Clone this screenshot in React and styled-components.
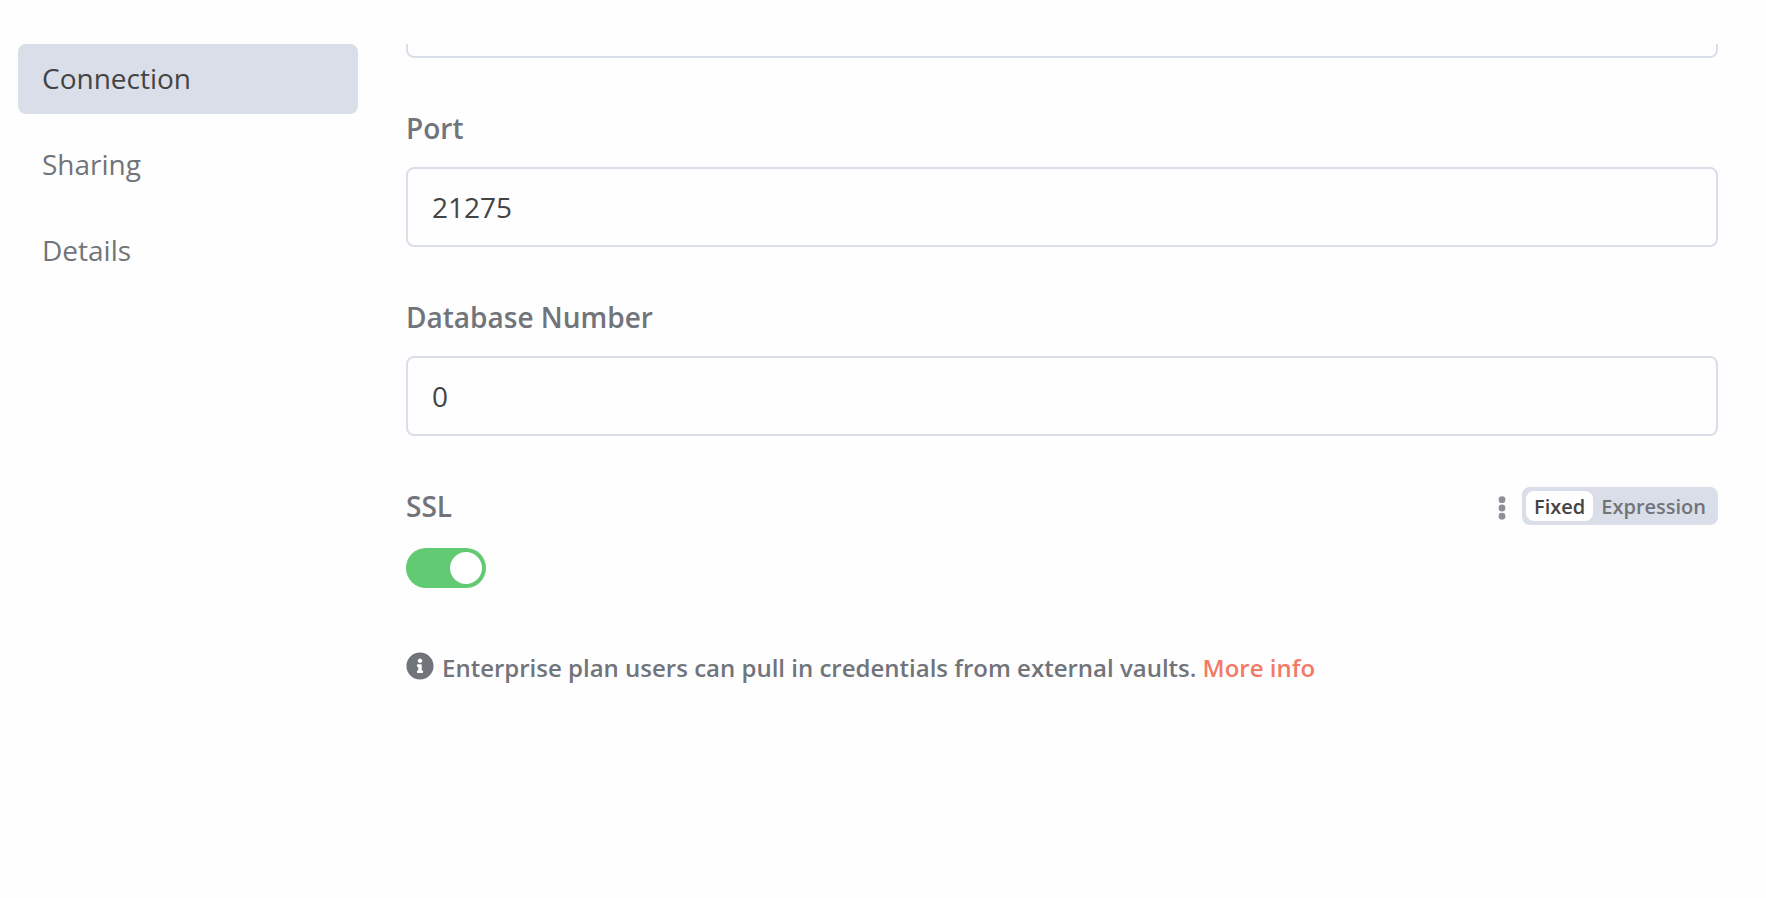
import React, { useState } from 'react'
import styled, { createGlobalStyle } from 'styled-components'

const GlobalStyle = createGlobalStyle`
  * {
    box-sizing: border-box;
  }
  body {
    margin: 0;
    background: #fefefe;
    color: #71747a;
    font-family: 'Open Sans', 'Noto Sans', sans-serif;
  }
  button,
  input {
    font-family: inherit;
  }
`

const Page = styled.main`
  display: flex;
  gap: 48px;
  padding: 44px 48px 44px 18px;
`

const Menu = styled.nav`
  display: flex;
  flex-direction: column;
  flex: 0 0 340px;
  gap: 16px;
`

const MenuItem = styled.button`
  height: 70px;
  padding: 0 24px 2px;
  border: none;
  border-radius: 8px;
  background: ${props => (props.$active ? '#dadee8' : 'transparent')};
  color: ${props => (props.$active ? '#444' : '#71747a')};
  font-size: 28px;
  line-height: 38px;
  text-align: left;
  cursor: pointer;
`

const Content = styled.section`
  flex: 1;
  min-width: 0;
`

const Form = styled.form`
  display: flex;
  flex-direction: column;
  gap: 51px;
`

const Field = styled.div`
  display: flex;
  flex-direction: column;
  gap: 20px;
`

// only the bottom edge of the scrolled field stays visible
const ScrolledField = styled.div`
  display: flex;
  align-items: flex-end;
  height: 14px;
  overflow: hidden;
`

const FieldHeader = styled.div`
  display: flex;
  align-items: center;
  justify-content: space-between;
  height: 38px;
`

const Label = styled.label`
  font-size: 28px;
  font-weight: 600;
  line-height: 38px;
`

const TextInput = styled.input`
  flex-shrink: 0;
  width: 100%;
  height: 80px;
  padding: 0 24px;
  border: 2px solid #dadee8;
  border-radius: 8px;
  outline: none;
  background: transparent;
  color: #444;
  font-size: 28px;
`

const Options = styled.div`
  display: flex;
  align-items: center;
  gap: 14px;
`

const MoreButton = styled.button`
  display: flex;
  padding: 0;
  border: none;
  background: none;
  color: #8d8f96;
  cursor: pointer;
`

const Segments = styled.div`
  display: flex;
  padding: 4px;
  border-radius: 8px;
  background: #dadee8;
`

const Segment = styled.button`
  height: 30px;
  padding: 2px 8px 0;
  border: none;
  border-radius: 8px;
  background: ${props => (props.$active ? '#fff' : 'transparent')};
  color: ${props => (props.$active ? '#444' : '#71747a')};
  font-size: 20px;
  font-weight: 600;
  line-height: 28px;
  cursor: pointer;
`

const Switch = styled.input`
  appearance: none;
  display: flex;
  width: 80px;
  height: 40px;
  margin: 3px 0 0;
  padding: 4px;
  border-radius: 20px;
  background: ${props => (props.checked ? '#61ca73' : '#dadee8')};
  cursor: pointer;
  &::before {
    content: '';
    width: 32px;
    height: 32px;
    margin-left: ${props => (props.checked ? 'auto' : '0')};
    border-radius: 50%;
    background: #fff;
  }
`

const Notice = styled.p`
  display: flex;
  align-items: center;
  gap: 8px;
  margin: 64px 0 0;
  font-size: 24px;
  font-weight: 600;
  line-height: 32px;
  svg {
    flex-shrink: 0;
    margin-bottom: 4px;
  }
  a {
    color: #f27a66;
    text-decoration: none;
  }
`

const MoreIcon = () => (
  <svg width='12' height='28' viewBox='0 0 12 28' fill='currentColor' aria-hidden='true'>
    <circle cx='6' cy='7.7' r='3.4' />
    <circle cx='6' cy='16' r='3.4' />
    <circle cx='6' cy='24.2' r='3.4' />
  </svg>
)

const InfoIcon = () => (
  <svg width='28' height='28' viewBox='0 0 512 512' fill='currentColor' aria-hidden='true'>
    <path d='M256 8C119.043 8 8 119.083 8 256c0 136.997 111.043 248 248 248s248-111.003 248-248C504 119.083 392.957 8 256 8zm0 110c23.196 0 42 18.804 42 42s-18.804 42-42 42-42-18.804-42-42 18.804-42 42-42zm56 254c0 6.627-5.373 12-12 12h-88c-6.627 0-12-5.373-12-12v-24c0-6.627 5.373-12 12-12h12v-64h-12c-6.627 0-12-5.373-12-12v-24c0-6.627 5.373-12 12-12h64c6.627 0 12 5.373 12 12v100h12c6.627 0 12 5.373 12 12v24z' />
  </svg>
)

const tabs = ['Connection', 'Sharing', 'Details']
const modes = ['Fixed', 'Expression']

const App = () => {
  const [tab, setTab] = useState('Connection')
  const [mode, setMode] = useState('Fixed')
  const [ssl, setSsl] = useState(true)

  return (
    <>
      <GlobalStyle />
      <Page>
        <Menu>
          {tabs.map(name => (
            <MenuItem key={name} type='button' $active={tab === name} onClick={() => setTab(name)}>
              {name}
            </MenuItem>
          ))}
        </Menu>
        <Content>
          <Form onSubmit={e => e.preventDefault()}>
            <ScrolledField>
              <TextInput type='text' aria-label='Host' />
            </ScrolledField>
            <Field>
              <FieldHeader>
                <Label htmlFor='port'>Port</Label>
              </FieldHeader>
              <TextInput id='port' type='text' inputMode='numeric' defaultValue='21275' />
            </Field>
            <Field>
              <FieldHeader>
                <Label htmlFor='database'>Database Number</Label>
              </FieldHeader>
              <TextInput id='database' type='text' inputMode='numeric' defaultValue='0' />
            </Field>
            <Field>
              <FieldHeader>
                <Label htmlFor='ssl'>SSL</Label>
                <Options>
                  <MoreButton type='button' aria-label='Parameter options'>
                    <MoreIcon />
                  </MoreButton>
                  <Segments>
                    {modes.map(name => (
                      <Segment key={name} type='button' $active={mode === name} onClick={() => setMode(name)}>
                        {name}
                      </Segment>
                    ))}
                  </Segments>
                </Options>
              </FieldHeader>
              <Switch id='ssl' type='checkbox' checked={ssl} onChange={e => setSsl(e.target.checked)} />
            </Field>
          </Form>
          <Notice>
            <InfoIcon />
            <span>
              Enterprise plan users can pull in credentials from external vaults.{' '}
              <a href='#external-secrets'>More info</a>
            </span>
          </Notice>
        </Content>
      </Page>
    </>
  )
}

export default App
